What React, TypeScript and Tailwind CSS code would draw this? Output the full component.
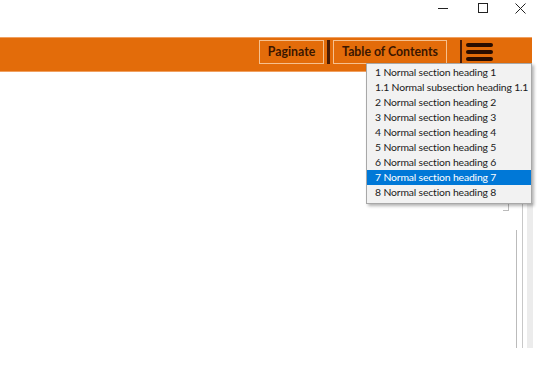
import { useState } from "react";

const headings = [
  "1 Normal section heading 1",
  "1.1 Normal subsection heading 1.1",
  "2 Normal section heading 2",
  "3 Normal section heading 3",
  "4 Normal section heading 4",
  "5 Normal section heading 5",
  "6 Normal section heading 6",
  "7 Normal section heading 7",
  "8 Normal section heading 8",
];

export default function App() {
  const [active, setActive] = useState(7);

  return (
    <div className="relative w-[540px] h-[377px] bg-white overflow-hidden font-['Lato',sans-serif]">
      {/* Barre de titre */}
      <div className="h-[37px] flex items-start justify-end pt-[2px] pr-[14px] text-[#222]">
        <div className="w-[12px] h-[12px] flex items-center justify-center">
          <div className="w-[10px] h-px bg-[#222]" />
        </div>
        <div className="w-[12px] h-[12px] flex items-center justify-center ml-[28px]">
          <div className="w-[10px] h-[10px] border border-[#222]" />
        </div>
        <div className="w-[12px] h-[12px] flex items-center justify-center ml-[25px]">
          <svg width="11" height="11" viewBox="0 0 11 11">
            <path d="M0.5 0.5 L10.5 10.5 M10.5 0.5 L0.5 10.5" stroke="#222" strokeWidth="1" />
          </svg>
        </div>
      </div>

      {/* Barre orange */}
      <div className="w-[532px] h-[35px] bg-[#e36c0a] border-y border-[#f0a060] flex items-start justify-end pt-[2px] pr-[39px]">
        <button className="w-[65px] h-[24px] border border-[#f6c08e] text-[12.3px] font-bold text-[#3b1600] leading-none">
          Paginate
        </button>
        <div className="w-[3px] h-[24px] bg-[#4a1c05] mx-[3px]" />
        <button className="w-[114px] h-[24px] border border-[#f6c08e] text-[12.3px] font-bold text-[#3b1600] leading-none">
          Table of Contents
        </button>
        <div className="w-[2px] h-[24px] bg-[#4a1c05] ml-[13px] mr-[4px]" />
        <div className="w-[27px] h-[24px] flex flex-col justify-center gap-[3px]">
          <div className="h-[4px] rounded-full bg-[#2a0d00]" />
          <div className="h-[4px] rounded-full bg-[#2a0d00]" />
          <div className="h-[4px] rounded-full bg-[#2a0d00]" />
        </div>
      </div>

      {/* Contenu sous le menu */}
      <div className="flex justify-end pr-[7px] pt-[131px]">
        <div className="flex items-stretch h-[145px]">
          <div className="flex flex-col w-[10px] mr-[3px]">
            <div className="h-[8px] border-r border-b border-[#bbb] w-[6px]" />
          </div>
          <div className="w-px bg-[#bbb] mt-[27px]" />
          <div className="w-px bg-[#c8c8c8] ml-[5px]" />
          <div className="w-[6px] bg-[#ececec] ml-[4px]" />
        </div>
      </div>

      {/* Menu déroulant de la table des matières */}
      <div className="absolute left-[366px] top-[63px] w-[166px] bg-[#f2f2f2] border border-[#a8a8a8] pt-px pb-[3px] shadow-[2px_2px_3px_rgba(0,0,0,0.3)]">
        {headings.map((h, i) => (
          <div
            key={h}
            onMouseEnter={() => setActive(i)}
            className={
              i === active
                ? "h-[15px] pl-[8px] text-[10.4px] tracking-[-0.15px] leading-[15px] bg-[#0078d7] text-white whitespace-nowrap"
                : "h-[15px] pl-[8px] text-[10.4px] tracking-[-0.15px] leading-[15px] text-[#1a1a1a] whitespace-nowrap"
            }
          >
            {h}
          </div>
        ))}
      </div>
    </div>
  );
}
